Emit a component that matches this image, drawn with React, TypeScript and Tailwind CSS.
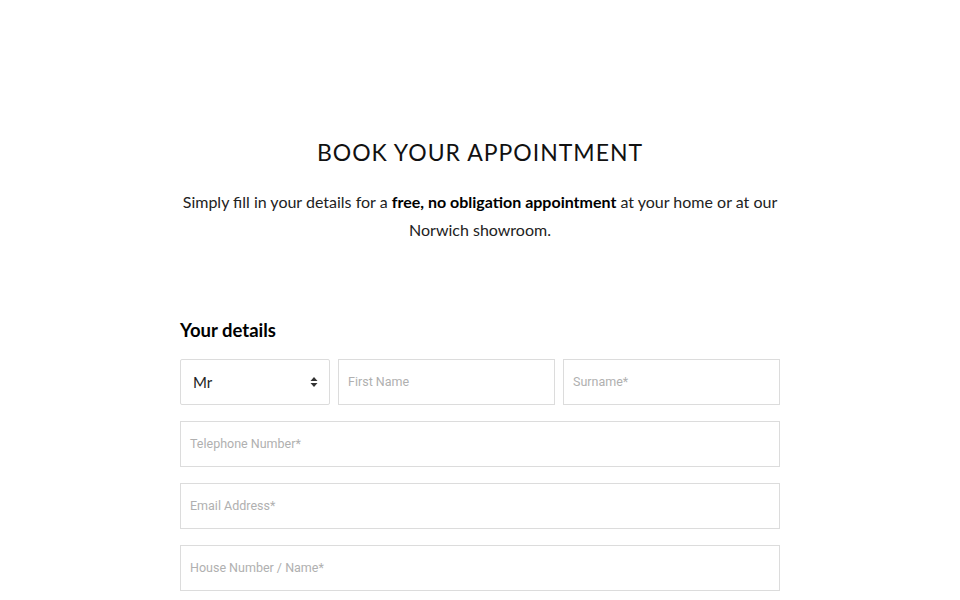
import React from "react";

function Field({ placeholder, className = "" }: { placeholder: string; className?: string }) {
  return (
    <div
      className={`h-[46px] border border-[#dcdcdc] bg-white flex items-center pl-[9px] ${className}`}
    >
      <span className="text-[12.5px] text-[#b0b0b0]" style={{ fontFamily: "Roboto, sans-serif" }}>
        {placeholder}
      </span>
    </div>
  );
}

export default function App() {
  return (
    <div className="w-[960px] h-[600px] bg-white overflow-hidden" style={{ fontFamily: "Lato, 'Open Sans', sans-serif" }}>
      <div className="w-[600px] mx-auto pt-[137px]">
        <h1 className="text-center text-[23px] leading-[30px] tracking-[1px] text-[#111] font-normal">
          BOOK YOUR APPOINTMENT
        </h1>
        <p className="mt-[21px] text-center text-[16px] leading-[28px] text-[#222]">
          Simply fill in your details for a <strong className="font-bold text-black">free, no obligation appointment</strong> at your home or at our Norwich showroom.
        </p>
        <h2 className="mt-[74px] text-[18.5px] leading-[24px] font-bold text-black">Your details</h2>
        <div className="mt-[17px] flex gap-[8px]">
          <div className="w-[150px] h-[46px] border border-[#dcdcdc] rounded-[2px] flex items-center justify-between pl-[12px] pr-[11px]">
            <span className="text-[15px] text-[#222]">Mr</span>
            <svg width="8" height="12" viewBox="0 0 8 12">
              <path d="M4 1 L7.5 5 H0.5 Z" fill="#333" />
              <path d="M4 11 L7.5 7 H0.5 Z" fill="#333" />
            </svg>
          </div>
          <Field placeholder="First Name" className="flex-1" />
          <Field placeholder="Surname*" className="flex-1" />
        </div>
        <div className="mt-[16px] flex flex-col gap-[16px]">
          <Field placeholder="Telephone Number*" />
          <Field placeholder="Email Address*" />
          <Field placeholder="House Number / Name*" />
        </div>
      </div>
    </div>
  );
}
